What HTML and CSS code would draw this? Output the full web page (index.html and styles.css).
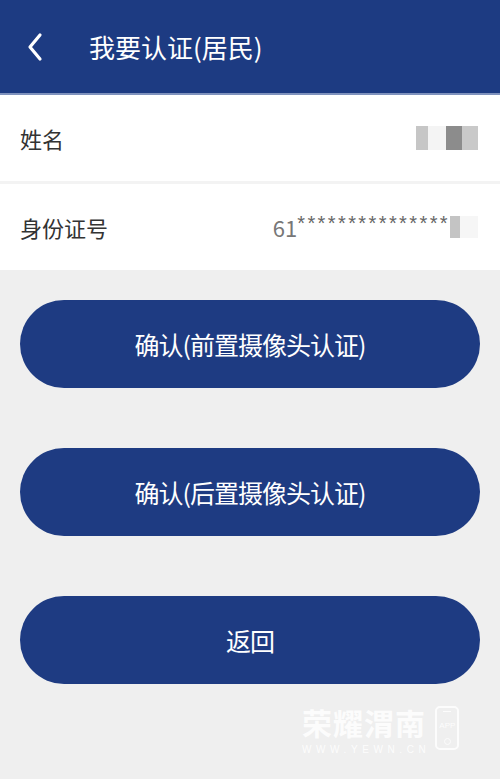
FILE: index.html
```html
<!DOCTYPE html>
<html lang="zh-CN">
<head>
<meta charset="UTF-8">
<title>我要认证(居民)</title>
<link rel="stylesheet" href="styles.css">
</head>
<body>

<div class="page">
  <!-- 顶部导航 -->
  <div class="topbar">
    <svg class="back" width="20" height="30" viewBox="0 0 20 30">
      <path d="M15 3 L5 15 L15 27" fill="none" stroke="#fff" stroke-width="3.2" stroke-linecap="round" stroke-linejoin="round"/>
    </svg>
    <span class="title">我要认证(居民)</span>
  </div>

  <!-- 个人信息 -->
  <div class="info">
    <div class="row">
      <span class="label">姓名</span>
      <span class="value">
        <i class="blur b1"></i><i class="blur b2"></i><i class="blur b3"></i><i class="blur b4"></i>
      </span>
    </div>
    <div class="row">
      <span class="label">身份证号</span>
      <span class="value">61<span class="stars">***************</span><i class="blur b5"></i><i class="blur b6"></i></span>
    </div>
  </div>

  <!-- 操作按钮 -->
  <div class="actions">
    <button class="btn">确认(前置摄像头认证)</button>
    <button class="btn">确认(后置摄像头认证)</button>
    <button class="btn">返回</button>
  </div>

  <!-- 水印 -->
  <div class="mark">
    <div class="mark-text">
      <div class="mark-name">荣耀渭南</div>
      <div class="mark-url">WWW.YEWN.CN</div>
    </div>
    <div class="mark-phone">
      <i class="mark-speaker"></i>
      <span class="mark-app">APP</span>
      <i class="mark-home"></i>
    </div>
  </div>
</div>

</body>
</html>
```

FILE: styles.css
```css
/* 认证页面 */
body {
  margin: 0;
  font-family: "Noto Sans CJK SC", "Noto Sans", sans-serif;
  background: #efefef;
}
.page {
  position: relative;
  width: 500px;
  height: 779px;
  overflow: hidden;
}
.topbar {
  height: 93px;
  background: #1d3b82;
  border-bottom: 2px solid #7f92bd;
  display: flex;
  align-items: center;
  color: #fff;
}
.back {
  margin-left: 25px;
  margin-right: 44px;
}
.title {
  font-size: 26px;
}
.info {
  background: #fff;
}
.row {
  height: 86px;
  padding: 0 20px;
  display: flex;
  align-items: center;
  justify-content: space-between;
}
.row + .row {
  border-top: 3px solid #f3f3f3;
}
.label {
  font-size: 22px;
  color: #333;
}
.value {
  display: flex;
  align-items: center;
  font-size: 22px;
  color: #777;
  margin-right: 2px;
}
.stars {
  font-family: "Liberation Sans", sans-serif;
  font-size: 20px;
  letter-spacing: 2.4px;
  margin-top: -8px;
  color: #666;
}
.blur {
  display: inline-block;
  height: 24px;
}
.b1 { width: 12px; background: #c6c6c6; }
.b2 { width: 18px; background: #f4f4f4; }
.b3 { width: 16px; background: #8c8c8c; }
.b4 { width: 16px; background: #c9c9c9; }
.b5 { width: 10px; height: 22px; background: #c4c4c4; }
.b6 { width: 18px; height: 22px; background: #f6f6f6; }
.actions {
  display: flex;
  flex-direction: column;
  gap: 60px;
  padding: 30px 20px;
}
.btn {
  height: 88px;
  border: none;
  border-radius: 44px;
  background: #1e3b82;
  color: #fff;
  font-family: inherit;
  font-size: 25px;
  letter-spacing: -1px;
}
.mark {
  position: absolute;
  left: 302px;
  top: 700px;
  display: flex;
  align-items: center;
  gap: 5px;
  color: #fff;
  opacity: 0.85;
}
.mark-name {
  font-size: 30px;
  font-weight: bold;
  line-height: 44px;
  letter-spacing: 1px;
}
.mark-url {
  font-family: "Liberation Sans", sans-serif;
  font-size: 10px;
  line-height: 12px;
  letter-spacing: 4.6px;
}
.mark-phone {
  width: 24px;
  height: 44px;
  border: 2px solid #fff;
  border-radius: 5px;
  display: flex;
  flex-direction: column;
  align-items: center;
  justify-content: space-between;
  padding: 3px 0;
  box-sizing: border-box;
}
.mark-speaker {
  width: 8px;
  height: 1px;
  background: #fff;
}
.mark-app {
  font-family: "Liberation Sans", sans-serif;
  font-size: 8px;
}
.mark-home {
  width: 5px;
  height: 5px;
  border: 1px solid #fff;
  border-radius: 50%;
}
```
